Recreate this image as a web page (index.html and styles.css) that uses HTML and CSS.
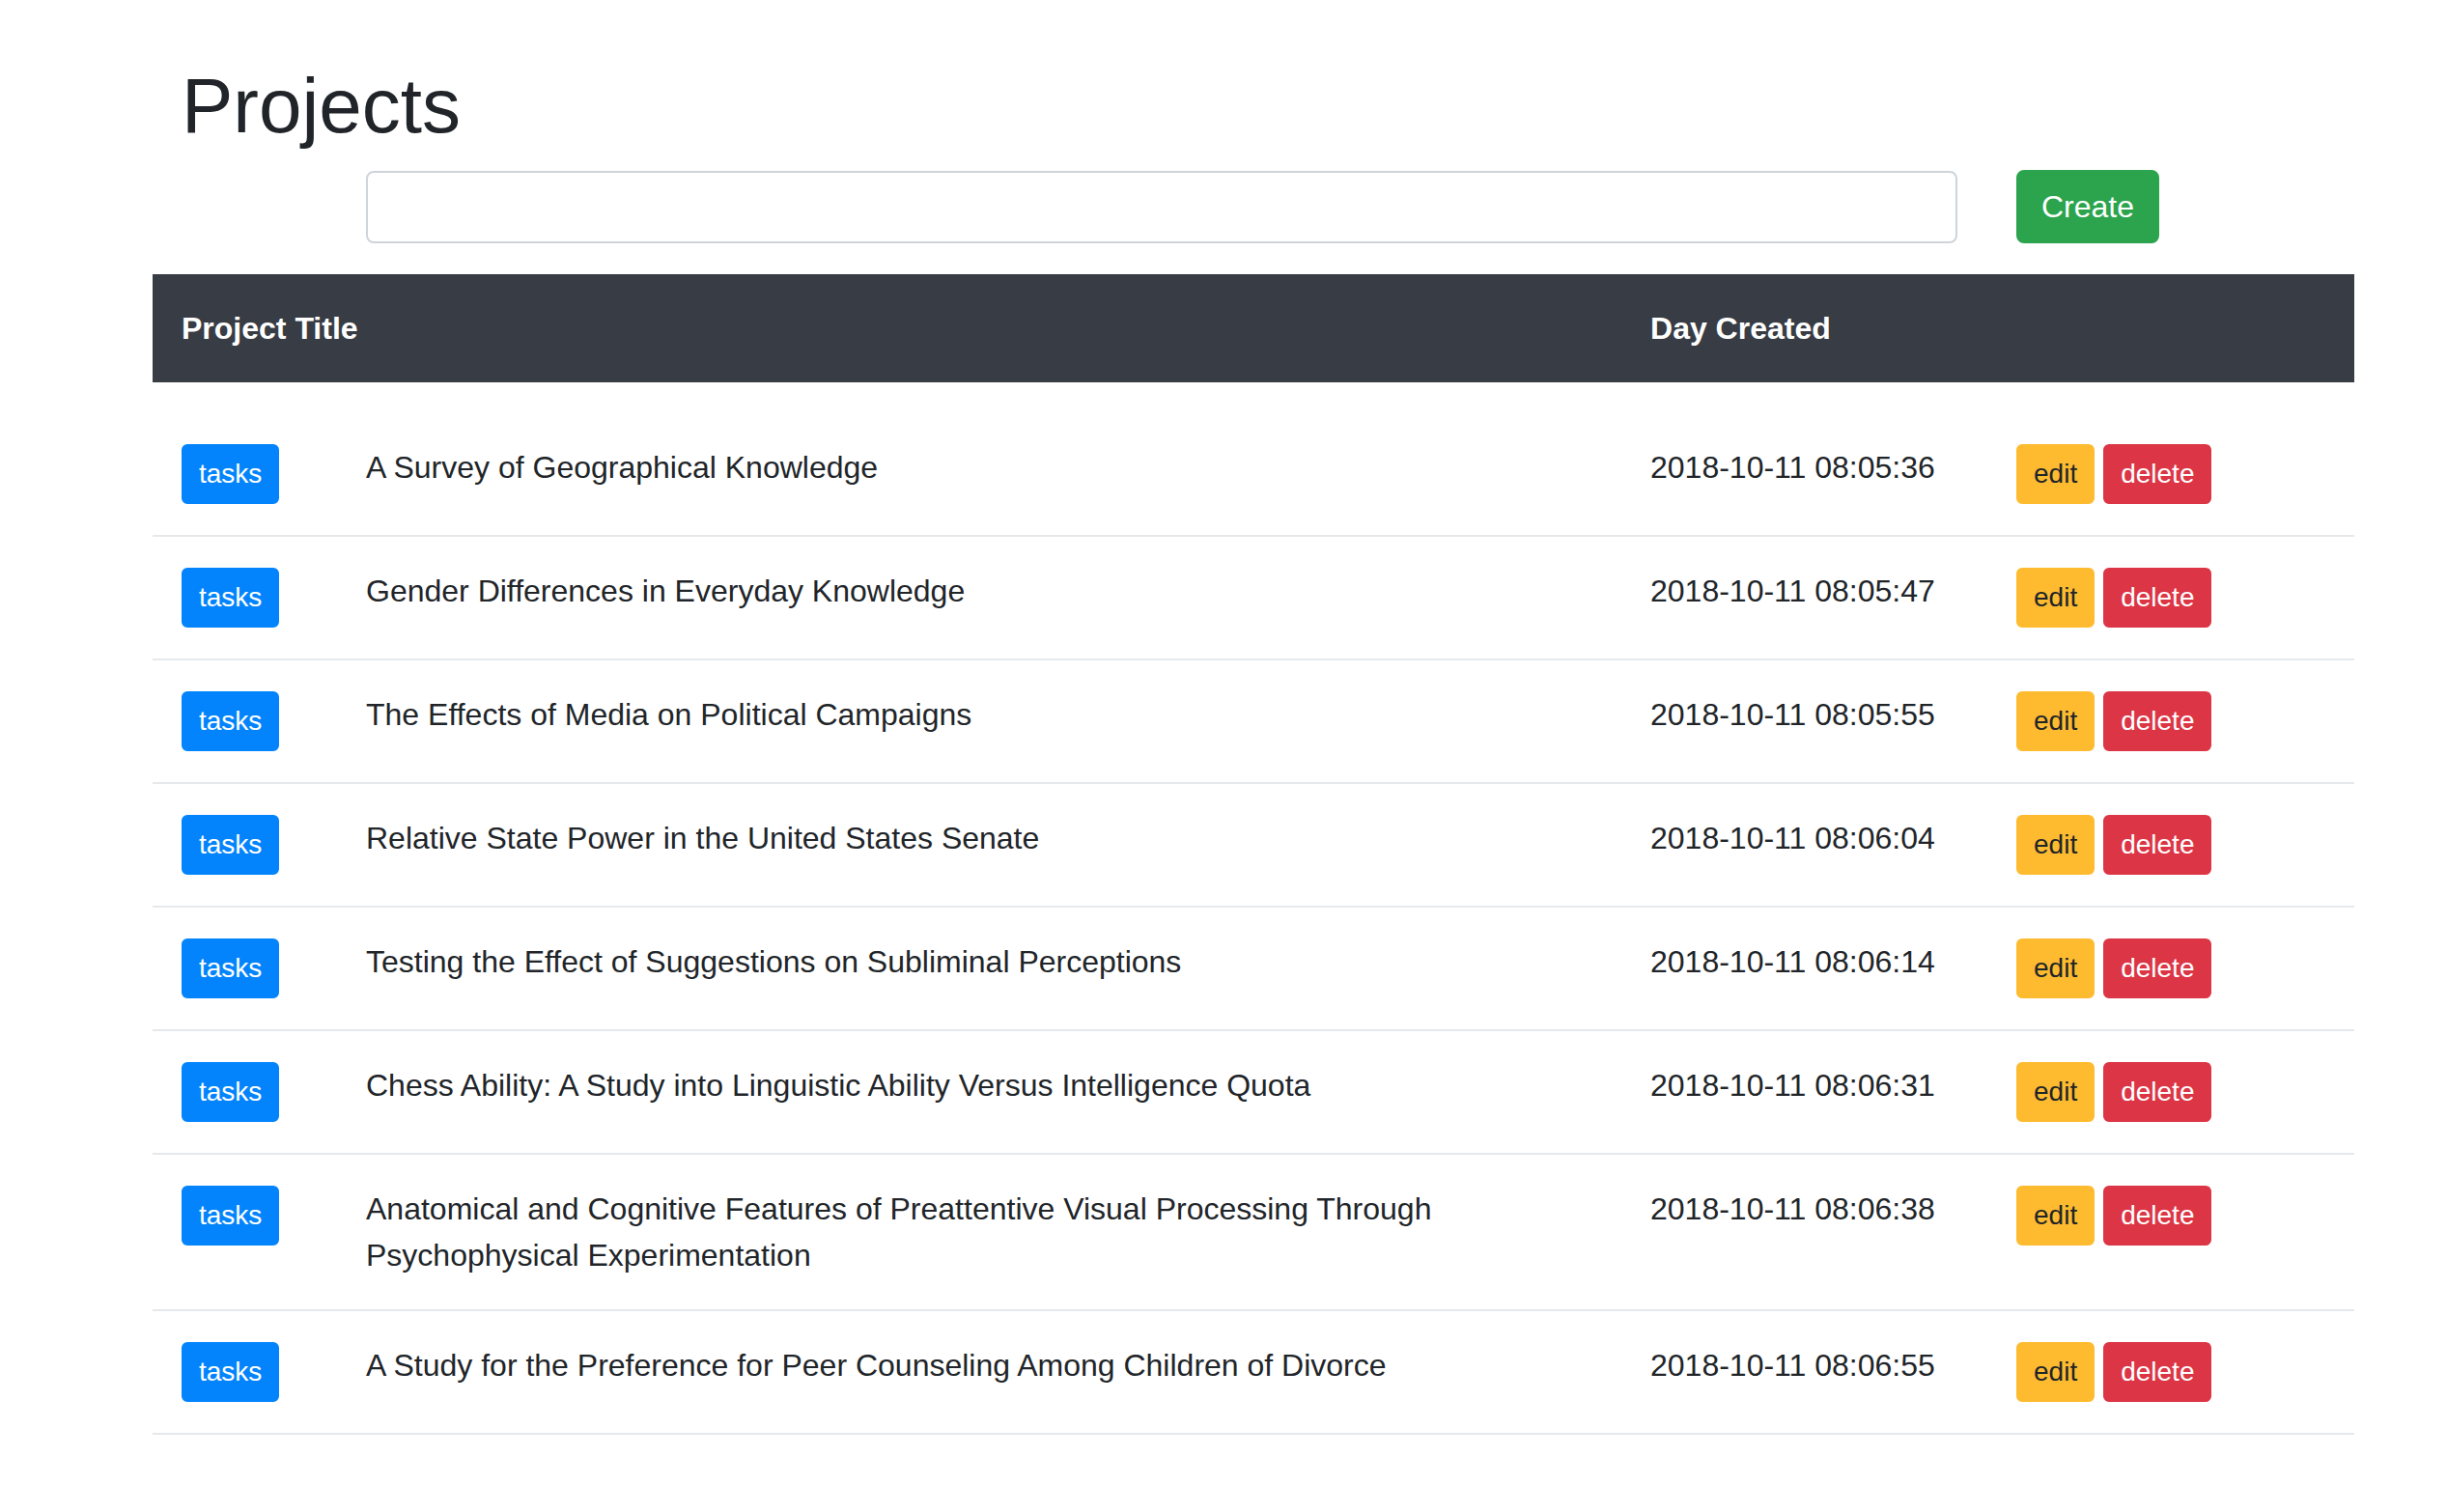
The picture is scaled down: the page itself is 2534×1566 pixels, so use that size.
FILE: index.html
```html
<!DOCTYPE html>
<html lang="en">
<head>
<meta charset="utf-8">
<title>Projects</title>
<link rel="stylesheet" href="styles.css">
</head>
<body>
<div class="page">
  <h1 class="page-title">Projects</h1>
  <form class="create-form">
    <input class="form-input" type="text">
    <button type="button" class="btn btn-success">Create</button>
  </form>
  <table class="projects">
    <colgroup>
      <col class="col-tasks">
      <col class="col-title">
      <col class="col-date">
      <col class="col-actions">
    </colgroup>
    <thead>
      <tr>
        <th colspan="2">Project Title</th>
        <th>Day Created</th>
        <th></th>
      </tr>
    </thead>
    <tbody>
      <tr>
        <td><button class="btn-sm btn-primary">tasks</button></td>
        <td>A Survey of Geographical Knowledge</td>
        <td>2018-10-11 08:05:36</td>
        <td><div class="actions"><button class="btn-sm btn-warning">edit</button><button class="btn-sm btn-danger">delete</button></div></td>
      </tr>
      <tr>
        <td><button class="btn-sm btn-primary">tasks</button></td>
        <td>Gender Differences in Everyday Knowledge</td>
        <td>2018-10-11 08:05:47</td>
        <td><div class="actions"><button class="btn-sm btn-warning">edit</button><button class="btn-sm btn-danger">delete</button></div></td>
      </tr>
      <tr>
        <td><button class="btn-sm btn-primary">tasks</button></td>
        <td>The Effects of Media on Political Campaigns</td>
        <td>2018-10-11 08:05:55</td>
        <td><div class="actions"><button class="btn-sm btn-warning">edit</button><button class="btn-sm btn-danger">delete</button></div></td>
      </tr>
      <tr>
        <td><button class="btn-sm btn-primary">tasks</button></td>
        <td>Relative State Power in the United States Senate</td>
        <td>2018-10-11 08:06:04</td>
        <td><div class="actions"><button class="btn-sm btn-warning">edit</button><button class="btn-sm btn-danger">delete</button></div></td>
      </tr>
      <tr>
        <td><button class="btn-sm btn-primary">tasks</button></td>
        <td>Testing the Effect of Suggestions on Subliminal Perceptions</td>
        <td>2018-10-11 08:06:14</td>
        <td><div class="actions"><button class="btn-sm btn-warning">edit</button><button class="btn-sm btn-danger">delete</button></div></td>
      </tr>
      <tr>
        <td><button class="btn-sm btn-primary">tasks</button></td>
        <td>Chess Ability: A Study into Linguistic Ability Versus Intelligence Quota</td>
        <td>2018-10-11 08:06:31</td>
        <td><div class="actions"><button class="btn-sm btn-warning">edit</button><button class="btn-sm btn-danger">delete</button></div></td>
      </tr>
      <tr>
        <td><button class="btn-sm btn-primary">tasks</button></td>
        <td>Anatomical and Cognitive Features of Preattentive Visual Processing Through Psychophysical Experimentation</td>
        <td>2018-10-11 08:06:38</td>
        <td><div class="actions"><button class="btn-sm btn-warning">edit</button><button class="btn-sm btn-danger">delete</button></div></td>
      </tr>
      <tr>
        <td><button class="btn-sm btn-primary">tasks</button></td>
        <td>A Study for the Preference for Peer Counseling Among Children of Divorce</td>
        <td>2018-10-11 08:06:55</td>
        <td><div class="actions"><button class="btn-sm btn-warning">edit</button><button class="btn-sm btn-danger">delete</button></div></td>
      </tr>
    </tbody>
  </table>
</div>
</body>
</html>
```
FILE: styles.css
```css
html, body {
  margin: 0;
  padding: 0;
  background: #ffffff;
}

body {
  font-family: "Liberation Sans", Arial, Helvetica, sans-serif;
  font-size: 32px;
  line-height: 48px;
  color: #212529;
}

.page {
  padding: 62px 0 80px 158px;
}

.page-title {
  margin: 0 0 18px 30px;
  font-size: 80px;
  line-height: 96px;
  font-weight: 400;
  color: #212529;
}

.create-form {
  display: flex;
  align-items: center;
  padding-left: 221px;
  margin: 0 0 32px 0;
  height: 76px;
}

.form-input {
  box-sizing: border-box;
  width: 1648px;
  height: 75px;
  margin-right: 61px;
  border: 2px solid #ced4da;
  border-radius: 8px;
  background: #fff;
  font: inherit;
  padding: 12px 24px;
}

.btn {
  box-sizing: border-box;
  height: 76px;
  padding: 12px 24px;
  font-family: inherit;
  font-size: 32px;
  line-height: 48px;
  border: 2px solid transparent;
  border-radius: 8px;
  cursor: pointer;
}

.btn-success {
  background: #2ba44d;
  border-color: #2ba44d;
  color: #fff;
}

.projects {
  width: 2280px;
  border-collapse: collapse;
  table-layout: fixed;
}

.col-tasks { width: 191px; }
.col-title { width: 1330px; }
.col-date { width: 379px; }
.col-actions { width: 380px; }

.projects thead th {
  background: #383c44;
  color: #fff;
  font-weight: 700;
  text-align: left;
  padding: 32px 30px;
  line-height: 48px;
  vertical-align: middle;
}

.projects td {
  padding: 32px 30px;
  vertical-align: top;
  border-top: 2px solid #e5e9ec;
  line-height: 48px;
}

.projects tbody tr:first-child td {
  border-top: 0;
  padding-top: 64px;
}

.projects tbody tr:last-child td {
  border-bottom: 2px solid #e5e9ec;
}

.actions {
  display: flex;
  gap: 9px;
}

.btn-sm {
  display: block;
  box-sizing: border-box;
  height: 62px;
  padding: 8px 16px;
  font-family: inherit;
  font-size: 28px;
  line-height: 42px;
  border: 2px solid transparent;
  border-radius: 6px;
  cursor: pointer;
  white-space: nowrap;
}

.btn-primary {
  background: #0384fc;
  border-color: #0384fc;
  color: #fff;
}

.btn-warning {
  background: #febb30;
  border-color: #febb30;
  color: #212529;
}

.btn-danger {
  background: #dc3545;
  border-color: #dc3545;
  color: #fff;
}
```
